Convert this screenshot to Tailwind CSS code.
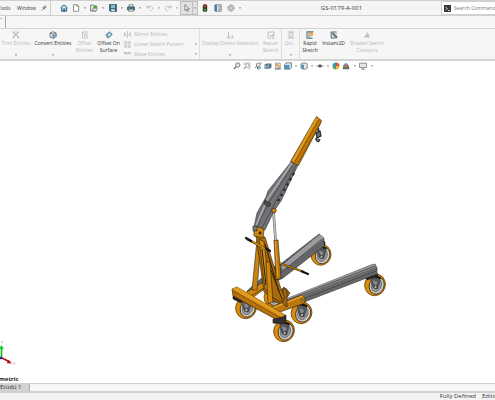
<!DOCTYPE html>
<html lang="en">
<head>
<meta charset="utf-8">
<meta name="viewport" content="width=device-width, initial-scale=1">
<title>GS-0179-A-001</title>
<script src="https://cdn.jsdelivr.net/npm/@tailwindcss/browser@4"></script>
</head>
<body class="flex h-screen flex-col overflow-hidden bg-white font-['Open_Sans','Noto_Sans',sans-serif] text-[5px] leading-[7px] text-[#333]">
<svg class="hidden">
  <symbol id="caret" viewBox="0 0 4 4"><path d="M1 1.400h2L2 2.700z" fill="#555"/></symbol>
  <symbol id="wheel" viewBox="-12 -12 24 24">
    <ellipse cx="-.5" rx="10.300" ry="11" transform="rotate(22)" fill="#d98c0c" stroke="#5a3d08" stroke-width=".7"/>
    <ellipse cx="1.300" rx="7.300" ry="8.800" transform="rotate(22)" fill="#cfcfd2" stroke="#3d2b0a" stroke-width=".8"/>
    <ellipse cx="1" rx="5" ry="6.600" transform="rotate(22)" fill="#97979b" stroke="#555" stroke-width=".6"/>
    <path d="M-5-10 5-7 4-2 2 4-2 3-4-2z" fill="#55565a" stroke="#333" stroke-width=".5"/>
    <path d="M-3-5 2-3 0 2z" fill="#8d8e94" stroke="none"/><circle cy="2" r="1.600" fill="#bbb" stroke="#222" stroke-width=".7"/>
    <path d="M-6-10 5-7" stroke="#151515" stroke-width="2"/>
  </symbol>
</svg>

<header class="flex h-4 shrink-0 items-center border-y border-[#cfcfcf] bg-[#f5f5f5]">
  <nav class="flex w-[51px] shrink-0 items-center self-stretch border-r border-[#ccc]" aria-label="Menu">
    <a href="#" class="-ml-0.5 w-[19px]">Tools</a>
    <a href="#" class="w-6">Window</a>
    <button aria-label="Pin menu"><svg class="size-[6px]" viewBox="0 0 6 6"><path d="M.5 5.5 2.5 3.5M1.5 2.5l2 2M2 3l2-2.2L5.3 2 3 4z" stroke="#777" stroke-width=".8" fill="#aaa"/></svg></button>
  </nav>
  <button class="ml-[7px] w-3 shrink-0" aria-label="Home"><svg class="mx-auto size-2" viewBox="0 0 8 8"><path d="M.5 4 4 .8 7.5 4M1.6 3.8V7.2H6.4V3.8" fill="#b9d9e8" stroke="#255a78"/><path d="M3.3 4.4h1.5v2.8H3.3z" fill="#255a78"/></svg></button>
  <div class="flex w-[110px] shrink-0 justify-between">
    <button class="flex w-[18px] items-center" aria-label="New"><svg class="ml-[2px] size-2" viewBox="0 0 8 8"><path d="M1.5.7h3.6l1.6 1.6v5H1.5zM5 .8v1.6h1.6" fill="#fff" stroke="#777" stroke-width=".8"/></svg><svg class="ml-[3px] size-1"><use href="#caret"/></svg></button>
    <button class="flex w-[18px] items-center" aria-label="Open"><svg class="ml-[2px] size-2" viewBox="0 0 8 8"><path d="M.6 1h3l.8 1H6v5H.6z" fill="#e9eee4" stroke="#666" stroke-width=".8"/><path d="M2 7 3.2 4h4.4L6 7z" fill="#d6dcd0" stroke="#666" stroke-width=".6"/><path d="M3 4.5C3 2.5 4 2 5.5 2V.8L7.6 2.8 5.5 4.6V3.4z" fill="#49a02c"/></svg><svg class="ml-[3px] size-1"><use href="#caret"/></svg></button>
    <button class="flex w-[18px] items-center" aria-label="Save"><svg class="ml-[2px] size-2" viewBox="0 0 8 8"><path d="M.6.6h6.8v6.8H1.4L.6 6.6z" fill="#35708f" stroke="#2b4654" stroke-width=".8"/><path d="M2 .8h4V4H2z" fill="#8dbdd4"/><path d="M2.2 5.2h3.6v2.2H2.2z" fill="#ddd"/></svg><svg class="ml-[3px] size-1"><use href="#caret"/></svg></button>
    <button class="flex w-[18px] items-center" aria-label="Print"><svg class="ml-[2px] size-2" viewBox="0 0 8 8"><path d="M2 .8h4V3H2z" fill="#fff" stroke="#555" stroke-width=".7"/><path d="M.5 3h7v3h-7z" fill="#4d7d95" stroke="#3a4c55" stroke-width=".7"/><path d="M1.5 5.2h5v2h-5z" fill="#e9e9e9" stroke="#555" stroke-width=".6"/></svg><svg class="ml-[3px] size-1"><use href="#caret"/></svg></button>
    <button class="flex w-[18px] items-center opacity-80" aria-label="Undo"><svg class="ml-[2px] size-2" viewBox="0 0 8 8"><path d="M1 1.2v2.6h3M1.2 3.5C4 1.2 7 2 6.6 4.8 6.4 6 5.5 6.6 4.4 7" fill="none" stroke="#b4b4b4"/></svg><svg class="ml-[3px] size-1"><use href="#caret"/></svg></button>
    <button class="flex w-[18px] items-center opacity-80" aria-label="Redo"><svg class="ml-[2px] size-2" viewBox="0 0 8 8"><path d="M7 1.2v2.6H4M6.8 3.5C4 1.2 1 2 1.4 4.8 1.6 6 2.5 6.6 3.6 7" fill="none" stroke="#b4b4b4"/></svg><svg class="ml-[3px] size-1"><use href="#caret"/></svg></button>
  </div>
  <button class="flex w-[18px] shrink-0 items-center self-stretch border border-[#bdbdbd] bg-[#e2e2e2]" aria-label="Select"><span class="flex w-3 items-center justify-center self-stretch border-r border-[#bdbdbd]"><svg class="size-2" viewBox="0 0 8 8"><path d="M2 .7v5.7l1.3-1.1 1 2.1 1.1-.5-1-2h1.8z" fill="#fff" stroke="#555" stroke-width=".7"/></svg></span><svg class="size-1"><use href="#caret"/></svg></button>
  <div class="flex shrink-0 items-center gap-[5px] pl-[3px]">
    <button aria-label="Rebuild"><svg class="size-2" viewBox="0 0 8 8"><rect x="1.800" y=".2" width="4.400" height="7.600" rx="1.500" fill="#343434"/><circle cx="4" cy="1.800" r="1.200" fill="#e0392c"/><circle cx="4" cy="4" r=".8" fill="#7d5c1d"/><circle cx="4" cy="6.100" r="1.200" fill="#3aab40"/></svg></button>
    <button aria-label="File properties"><svg class="size-2" viewBox="0 0 8 8"><path d="M.8.8h6.4v6.4H.8z" fill="#e8eef1" stroke="#5d6d76" stroke-width=".8"/><path d="M1 1h2v6H1z" fill="#507f99"/><path d="M4 2.4h2.5M4 4h2.5M4 5.6h2.5" stroke="#555" stroke-width=".6"/></svg></button>
    <button class="flex items-center gap-[3px]" aria-label="Options"><svg class="size-2" viewBox="0 0 8 8"><circle cx="4" cy="4" r="3" fill="#ddd" stroke="#777" stroke-dasharray="1.4 .4"/><circle cx="4" cy="4" r="1.4" fill="#fff" stroke="#777" stroke-width=".7"/></svg><svg class="size-1"><use href="#caret"/></svg></button>
  </div>
  <h1 class="grow text-center text-[6px]">GS-0179-A-001</h1>
  <label class="flex w-[54px] shrink-0 items-center self-stretch border-y border-l border-[#d0d0d0] bg-white pl-[2px]">
    <svg class="size-[7px] shrink-0" viewBox="0 0 7 7"><path d="M0 0h7v7H0z" fill="#383838"/><path d="m1.500 2 2 1.500-2 1.500M4 5.500h2" stroke="#ddd" stroke-width=".8" fill="none"/></svg>
    <span class="sr-only">Search Commands</span>
    <input class="ml-[3px] w-0 grow outline-none placeholder:text-[#777]" placeholder="Search Commands">
  </label>
</header>

<div class="h-3 shrink-0 bg-[#f6f6f6]"><div class="h-full w-[6px] border-r border-[#aaa]"><svg class="-ml-px size-1 pt-px"><use href="#caret"/></svg></div></div>

<section class="flex h-[33px] shrink-0 border-t border-b-2 border-[#d4d4d4] bg-[#f6f6f6] text-center leading-[7px] whitespace-nowrap" aria-label="Sketch commands">
  <button class="flex w-8 flex-col items-center pt-[2px] text-[#b8b8b8]"><svg class="mb-px size-2" viewBox="0 0 8 8"><path d="m1 1 5.500 5M6.500 1 1 6M.7 6.800h2M5 6.800h2M.7 1h2M5 1h2" stroke="#bbb" stroke-width="1.100"/></svg><span>Trim Entities</span><svg class="mt-[6px] size-1"><use href="#caret"/></svg></button>
  <button class="flex w-[42px] flex-col items-center pt-[2px]"><svg class="mb-px size-2" viewBox="0 0 8 8"><path d="m1 2 3-1.300L7.200 2v3.800L4 7.400 1 6z" fill="#e2e7e9" stroke="#59666c" stroke-width=".8"/><path d="m1 2 3 1.200L7 2M4 3.200v4" fill="none" stroke="#59666c" stroke-width=".7"/><path d="M5 4.200h2M5 4v3" stroke="#2e85b5"/></svg><span>Convert Entities</span><svg class="mt-[6px] size-1"><use href="#caret"/></svg></button>
  <button class="flex w-[21px] flex-col items-center pt-[2px] text-[#b8b8b8]"><svg class="mb-px size-2" viewBox="0 0 8 8"><path d="M7 1H1.500v6H7M7 3H3.500v2H7" fill="none" stroke="#c2c2c2"/></svg><span>Offset<br>Entities</span></button>
  <button class="flex w-[27px] flex-col items-center pt-[2px]"><svg class="mb-px size-2" viewBox="0 0 8 8"><path d="M.8 4 4.300.9 7.200 3.200 4 6.500z" fill="#74b0d0" stroke="#486b7c" stroke-width=".8"/><path d="M2.700 4 4.500 2.400 5.800 3.400 4 5z" fill="#e7f1f5"/><path d="M1 5.500 3.500 7.500" stroke="#888"/></svg><span>Offset On<br>Surface</span></button>
  <div class="flex w-[78px] flex-col border-r border-[#ddd] pr-px pl-[2px] leading-[10px] text-[#b8b8b8]">
    <button class="flex h-[10px] items-center gap-[3px]"><svg class="size-[7px]" viewBox="0 0 7 7"><path d="M3.500 0v7M.5 1.500l2 2-2 2zM6.500 1.500l-2 2 2 2z" fill="none" stroke="#bbb" stroke-width=".8"/></svg>Mirror Entities</button>
    <button class="flex h-[10px] items-center gap-[3px]"><svg class="size-[7px]" viewBox="0 0 7 7"><path d="M.7.7h2v2h-2zM4.300.7h2v2h-2zM.7 4.300h2v2h-2zM4.300 4.300h2v2h-2z" fill="none" stroke="#bbb" stroke-width=".8"/></svg>Linear Sketch Pattern<svg class="ml-auto size-1"><use href="#caret"/></svg></button>
    <button class="flex h-[10px] items-center gap-[3px]"><svg class="size-[7px]" viewBox="0 0 7 7"><path d="M.5 3.500v-2h2v2M4 3.500v-2h2.200v2" fill="none" stroke="#aaa" stroke-width=".9"/></svg>Move Entities<svg class="ml-auto size-1"><use href="#caret"/></svg></button>
  </div>
  <button class="flex w-[60px] flex-col items-center pt-[2px] text-[#b8b8b8]"><svg class="mb-px size-2" viewBox="0 0 8 8"><path d="M2.500.8v5.700M.8 6.800h3.800M5.400 6.800h2.200M6.200 4v3" fill="none" stroke="#bbb"/></svg><span>Display/Delete Relations</span><svg class="mt-[6px] size-1"><use href="#caret"/></svg></button>
  <button class="flex w-[22px] flex-col items-center border-r border-[#ddd] pt-[2px] text-[#b8b8b8]"><svg class="mb-px size-2" viewBox="0 0 8 8"><path d="M1 1h6v4H4.500M1 1v6h3" fill="none" stroke="#c0c0c0"/><path d="m3 4 1.500 1.500L7 3M5 7h2.500" fill="none" stroke="#aaa"/></svg><span>Repair<br>Sketch</span></button>
  <button class="flex w-[18px] flex-col items-center border-r border-[#ddd] pt-[2px] text-[#b8b8b8]"><svg class="mb-px size-2" viewBox="0 0 8 8"><path d="M.5 1h7M.5 7h7" stroke="#bbb"/><circle cx="4" cy="4" r="2.200" fill="none" stroke="#bbb"/><circle cx="4" cy="4" r=".6" fill="#bbb"/></svg><span>Qui...</span><svg class="mt-[6px] size-1"><use href="#caret"/></svg></button>
  <button class="flex w-[20px] flex-col items-center pt-[2px]"><svg class="mb-px size-2" viewBox="0 0 8 8"><path d="M7 .9H1v6.200h5.500" fill="#e8f1f5" stroke="#477991" stroke-width="1.100"/><path d="M3 6V2.300h3.300v2H3.200M5 2.500 7.500.8" stroke="#e28720" fill="none"/></svg><span>Rapid<br>Sketch</span></button>
  <button class="flex w-[27px] flex-col items-center pt-[2px]"><svg class="mb-px size-2" viewBox="0 0 8 8"><path d="M.6 1h6M1.200 1v6h5.500V5" fill="#d9e8ef" stroke="#38728e"/><path d="m2.500 2 4 4" stroke="#454545" stroke-width="1.200"/><path d="m3 4.500 1.800 1.800M5 1.800l2 1.600" stroke="#d59a30"/></svg><span>Instant2D</span></button>
  <button class="flex w-[40px] flex-col items-center pt-[2px] text-[#b8b8b8]"><svg class="mb-px size-2" viewBox="0 0 8 8"><path d="M1 7 4.500 1 7 5.500 4 6z" fill="#c9c9c9"/><path d="M.8 5.500 4 4l3 3z" fill="#bababa"/></svg><span>Shaded Sketch<br>Contours</span></button>
</section>

<main class="relative min-h-0 grow overflow-hidden bg-white">
  <div class="flex items-center justify-center pt-px pl-[112px]" role="toolbar" aria-label="View">
    <div class="flex gap-[2px]">
      <button aria-label="Zoom to fit"><svg class="size-2" viewBox="0 0 8 8"><path d="m.8 7 2.400-2.400" stroke="#666" stroke-width="1.200"/><circle cx="4.800" cy="3" r="2.200" fill="#dce8ee" stroke="#777" stroke-width=".9"/></svg></button>
      <button aria-label="Zoom to area"><svg class="size-2" viewBox="0 0 8 8"><path d="M1 3V1h6v6H5" stroke="#aaa" stroke-width=".7" fill="none"/><path d="m.8 7 2.400-2.400" stroke="#666"/><circle cx="4.400" cy="3.500" r="1.800" fill="#fff" stroke="#888" stroke-width=".8"/></svg></button>
      <button class="pl-px" aria-label="Previous view"><svg class="size-2" viewBox="0 0 8 8"><path d="m1 6 2-2M7.500.5 5.500 2" stroke="#777"/><circle cx="4.300" cy="3" r="2" fill="#eee" stroke="#777" stroke-width=".8"/><path d="M3 6h4M4.500 4.500 3 6l1.500 1.500" stroke="#347b9e" fill="none"/></svg></button>
      <button aria-label="Section view"><svg class="size-2" viewBox="0 0 8 8"><path d="m.5 2.500 2-1h5v4l-2 1.300h-5z" fill="#63747d"/><path d="M3.200 3v3.500L5 5.500V2z" fill="#68b4d8"/><path d="M1 3h1.300v3H1z" fill="#b0bac0"/></svg></button>
      <button aria-label="Dynamic annotation"><svg class="size-2" viewBox="0 0 8 8"><path d="M1.500 1h4.800v5.500H1.500z" fill="#d9d9d0" stroke="#999" stroke-width=".7"/><path d="m2 2 4.500 4.500" stroke="#e4a32e" stroke-width="1.600"/><path d="M.8 7h6" stroke="#447b98"/></svg></button>
      <button class="flex items-center gap-[2px]" aria-label="View orientation"><svg class="size-2" viewBox="0 0 8 8"><path d="M.5 2.500 2 .8h5.500v4.700L6 7.200H.5z" fill="#dbe5ea" stroke="#5d7079" stroke-width=".8"/><path d="M1 3h4.500v4H1z" fill="#4f96bd"/></svg><svg class="size-1"><use href="#caret"/></svg></button>
      <button class="flex items-center gap-[2px]" aria-label="Display style"><svg class="size-2" viewBox="0 0 8 8"><path d="m1 1.800 3-1 3.200 1v4.500L4 7.400 1 6.300z" fill="#e5e8ea" stroke="#69767c" stroke-width=".8"/><path d="m1.400 2.200 2.600.9v4l-2.600-1z" fill="#4b94bb"/></svg><svg class="size-1"><use href="#caret"/></svg></button>
      <button class="flex items-center gap-[2px]" aria-label="Hide and show items"><svg class="size-2" viewBox="0 0 8 8"><path d="M.4 4Q4 1.200 7.600 4 4 6.800.4 4" fill="#ccc" stroke="#999" stroke-width=".5"/><circle cx="4" cy="4" r="1.300" fill="#444"/></svg><svg class="size-1"><use href="#caret"/></svg></button>
      <button aria-label="Edit appearance"><svg class="size-2" viewBox="0 0 8 8"><path d="M4 4V.5A3.500 3.500 0 0 0 .5 4z" fill="#3d8fbd"/><path d="M4 4h3.500A3.500 3.500 0 0 0 4 .5z" fill="#d85742"/><path d="M4 4v3.500A3.500 3.500 0 0 0 7.500 4z" fill="#e8b941"/><path d="M4 4H.5A3.500 3.500 0 0 0 4 7.500z" fill="#58a467"/></svg></button>
      <button class="flex items-center gap-[3px]" aria-label="Apply scene"><svg class="size-2" viewBox="0 0 8 8"><path d="M1 4Q4-2 7 4z" fill="#5aa3c7"/><path d="M.5 7.200 1.500 3.500h5l1 3.700z" fill="#5c666c"/><circle cx="4" cy="4" r="1.700" fill="#d66b3d"/><path d="M1 6 3 4.500l1 2z" fill="#4b9b52"/></svg><svg class="size-1"><use href="#caret"/></svg></button>
      <button class="flex items-center gap-[3px]" aria-label="View settings"><svg class="size-2" viewBox="0 0 8 8"><path d="M.5 1.200h7v4.300h-7z" fill="#e5e7e9" stroke="#888" stroke-width=".9"/><path d="M4 5.500v1.700M2.300 7.200h3.400" stroke="#888"/></svg><svg class="size-1"><use href="#caret"/></svg></button>
    </div>
  </div>

  <svg class="absolute top-[49px] left-[230px] h-[235px] w-[160px]" viewBox="230 110 160 235" role="img" aria-label="Hydraulic floor crane model">
    <g stroke-linejoin="round" stroke="#292013" stroke-width=".6">
      <use href="#wheel" x="310" y="243" width="23" height="24"/>
      <path d="m313 245 10-5 2 2v3l-9 4z" fill="#26282a"/>
      <path d="m247 291 8 1 28-14 41-32v-8l-5-4-37 29-8 4z" fill="#636568" stroke="#333"/>
      <path d="m281 266 38-32 5 4-41 32z" fill="#9a9c9e" stroke="none"/>
      <path d="m272 280 50-41M279 267l41-33" stroke="#4a4b4d" stroke-width=".8"/>
      <use href="#wheel" x="234.500" y="296" width="24" height="24"/>
      <use href="#wheel" x="263" y="286" width="22" height="22"/>
      <use href="#wheel" x="290" y="301" width="24" height="24"/>
      <use href="#wheel" x="363.500" y="273" width="24" height="24"/>
      <path d="m364 277 13-4 1 3-11 4z" fill="#242628"/>
      <path d="m286 299 85-34 4-1 2 4v6l-78 30-13 3z" fill="#66686a" stroke="#333"/>
      <path d="m287 298 87-34 2 3-89 34z" fill="#96989a" stroke="none"/>
      <path d="m287 300 88-34M290 304l86-33" stroke="#414243" stroke-width=".8"/>
      <path d="m245 293 25-15 5 3-24 18z" fill="#d1860c"/>
      <path d="m251 296 26-16" stroke="#614009" stroke-width="1"/>
      <path d="m271 300 13-13 6 6-8 12z" fill="#9b620a"/>
      <path d="m270 308 32-13 3 3v5l-25 9-8 0z" fill="#bc780c"/>
      <path d="m272 308 31-12" stroke="#e6a12b" stroke-width="1.500"/>
      <path d="M283 289h4v18l-4-3z" fill="#9f660c"/><circle cx="302" cy="300" r="1.100" fill="#ccc"/>
      <path d="m257 240h4l-4 50h-5z" fill="#c98310"/>
      <path d="m256 236 9 1 15 49 5 12-5 4-16-10z" fill="#a86b0b"/>
      <path d="m259 239 5 3 6 50-5-3z" fill="#d78d11"/>
      <path d="m265 244 14 48M262 249l4 36M269 265l13 34" stroke="#2d210c" stroke-width="1"/>
      <path d="M266 262h4l3 40-5 2z" fill="#cf870e"/>
      <path d="m274 240h4l3 38-5 2z" fill="#bf7a0c"/>
      <path d="M275.500 241l2 35" stroke="#eaa42d" stroke-width="1"/>
      <path d="m273.500 212 2 28" stroke="#5b5d60" stroke-width="2.600"/><path d="m273.500 212 2 28" stroke="#c6c9cc" stroke-width="1.500"/>
      <path d="m279 263 25 9" stroke="#3d2a08" stroke-width="2"/><path d="m279 263 25 9" stroke="#d0870e" stroke-width="1.200"/><path d="m302 271.500 6 2.500" stroke="#171717" stroke-width="2.200" stroke-linecap="round"/>
      <path d="m232 289 5-2 48 28-1 7-5-1-46-25z" fill="#b87308"/>
      <path d="m232 289 5-2 48 28-4 2z" fill="#e09a20" stroke="none"/>
      <path d="m233 291 48 27" stroke="#6b4508"/>
      <use href="#wheel" x="272.500" y="319" width="24" height="24"/>
      <path d="m273 319 10-2 3-2v7l-4 2-9-1z" fill="#303133"/>
      <path d="m233 296 9 5-1 2-8-4z" fill="#252628"/>
      <path d="m291 162 7 3-17 36-7 10-9 19-11-3 3-14 9-16 2-6z" fill="#707275" stroke="#303235"/>
      <path d="m292 163-25 37-11 26" stroke="#a8aaac" stroke-width="1.800" fill="none"/>
      <path d="m293 165-25 39-11 23M296 166l-21 37-13 25" stroke="#444649" stroke-width=".8" fill="none"/>
      <path d="m294 173-17 30" stroke="#202224" stroke-width="2" stroke-dasharray="2.500 3.500"/>
      <path d="m265 200 6 4-2 3-5-3z" fill="#4b4d4f"/>
      <path d="m316.500 116.500 5 4-1 3-22 42-8-4z" fill="#c47c05"/>
      <path d="m317 118-24 43" stroke="#e8a021" stroke-width="1.600"/><path d="m319 120-24 42M321 122l-23 41" stroke="#7c4d06" stroke-width=".8"/>
      <path d="M318 128l1 5" stroke="#393b3d" stroke-width="2"/>
      <path d="m316 133 4-2 1 5-4 2zM316 138v2q3 4 4-1" fill="#6f7274" stroke="#242628" stroke-width="1.200"/>
      <circle cx="274" cy="210.500" r="2.300" fill="#c9820f"/>
      <path d="m254 226 8 2 2 2-1 8-9-2z" fill="#ce8710"/>
      <path d="M253 226h4v5h-4z" fill="#77797c"/><circle cx="260" cy="233" r="1.200" fill="#4a3308"/>
      <path d="m247 239 23 12" stroke="#3c2a0a" stroke-width="2.400"/><path d="m252 241 15 9" stroke="#d38b12" stroke-width="1.500"/>
      <path d="m246 238 5 3M266 248.500l4 2.500" stroke="#151515" stroke-width="2.200" stroke-linecap="round"/>
    </g>
  </svg>

  <svg class="absolute bottom-[17px] left-0 h-[28px] w-[18px]" viewBox="0 338 18 28" role="img" aria-label="Axis triad">
    <path d="M1.500 358v-10" stroke="#13b421" stroke-width="1.600"/><path d="m-.8 349 2.300-4 2.300 4z" fill="#13c522"/>
    <path d="m2 358 8 4" stroke="#b31212" stroke-width="1.600"/><path d="m8 359.500 4 4-5-.3z" fill="#b31212"/>
    <circle cx="1" cy="358" r="1.300" fill="#1b2b9d"/>
    <text x="1" y="344" font-size="4" fill="#31cc3d">Y</text><text x="13" y="365" font-size="4" fill="#e66">X</text>
  </svg>
  <p class="absolute bottom-0 left-0 -ml-[13px] text-[6px] leading-[8px] font-bold text-[#222]">*Isometric</p>
</main>

<div class="flex h-[10px] shrink-0 border-t border-b-2 border-[#d0d0d0] bg-[#f6f6f6]">
  <button class="flex w-[30px] items-center border-r border-[#aaa] bg-[#d2d2d2] text-[6px] whitespace-nowrap">Etüdü 1</button>
</div>
<footer class="flex h-[7px] shrink-0 justify-end gap-[6px] bg-[#f3f3f3] text-[6px] whitespace-nowrap">
  <span>Fully Defined</span><span class="w-[13px] overflow-hidden">Editing</span>
</footer>
</body>
</html>
